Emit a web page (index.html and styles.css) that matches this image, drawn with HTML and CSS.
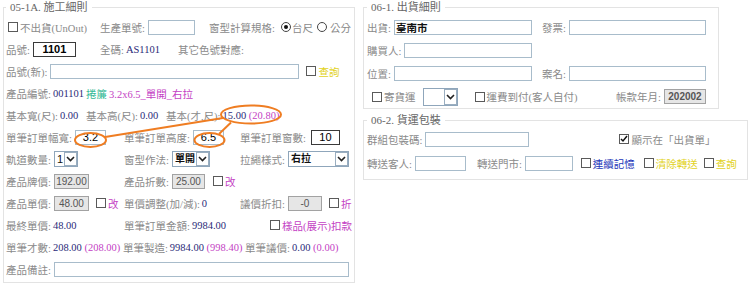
FILE: index.html
```html
<!DOCTYPE html>
<html lang="zh-Hant">
  <head>
    <meta charset="UTF-8" />
    <title>施工細則</title>
    <link rel="stylesheet" href="styles.css">
  </head>
  <body>
    <div class="page">
      <fieldset class="box work">
        <legend>05-1A. 施工細則</legend>
        <div class="row g-top">
          <div class="cell ml2"><span class="cb"></span>不出貨(UnOut)</div>
          <div class="cell">生產單號:<input class="txt w47" type="text"></div>
          <div class="cell">窗型計算規格:<span class="rd on ml6"></span><span class="ml1">台尺</span><span class="rd ml4"></span><span class="ml3">公分</span></div>
        </div>
        <div class="row g-code">
          <div class="cell">品號:<input class="txt dark bold w43" type="text" value="1101"></div>
          <div class="cell">全碼: <span class="val">AS1101</span></div>
          <div class="cell">其它色號對應:</div>
        </div>
        <div class="row">
          品號(新):<input class="txt w249" type="text"><span class="cb ml7"></span><span class="yl">查詢</span>
        </div>
        <div class="row">
          產品編號: <span class="val">001101</span> <span class="tl">捲簾</span> <span class="pk">3.2x6.5_單開_右拉</span>
        </div>
        <div class="row g-base">
          <div class="cell">基本寬(尺): <span class="val">0.00</span></div>
          <div class="cell">基本高(尺): <span class="val">0.00</span></div>
          <div class="cell">基本(才,尺): <span class="val">15.00</span>&nbsp;<span class="pk">(20.80)</span></div>
        </div>
        <div class="row g3">
          <div class="cell">單筆訂單幅寬:<input class="txt w31" type="text" value="3.2"></div>
          <div class="cell">單筆訂單高度:<input class="txt w31" type="text" value="6.5"></div>
          <div class="cell">單筆訂單窗數:<input class="txt dark w29 ml5" type="text" value="10"></div>
        </div>
        <div class="row g3">
          <div class="cell">軌道數量:<span class="sel w24"><span class="sel-v">1</span><span class="arr"><svg width="9" height="6" viewBox="0 0 9 6"><path d="M1 1l3.5 3.5L8 1" fill="none" stroke="#222" stroke-width="1.6"/></svg></span></span></div>
          <div class="cell">窗型作法:<span class="sel w38"><span class="sel-v b">單開</span><span class="arr"><svg width="9" height="6" viewBox="0 0 9 6"><path d="M1 1l3.5 3.5L8 1" fill="none" stroke="#222" stroke-width="1.6"/></svg></span></span></div>
          <div class="cell">拉繩樣式:<span class="sel w61"><span class="sel-v b">右拉</span><span class="arr"><svg width="9" height="6" viewBox="0 0 9 6"><path d="M1 1l3.5 3.5L8 1" fill="none" stroke="#222" stroke-width="1.6"/></svg></span></span></div>
        </div>
        <div class="row g3">
          <div class="cell">產品牌價:<input class="txt off w35" type="text" value="192.00"></div>
          <div class="cell">產品折數:<input class="txt off w33" type="text" value="25.00"><span class="cb ml8"></span><span class="pk">改</span></div>
          <div class="cell"></div>
        </div>
        <div class="row g3">
          <div class="cell">產品單價:<input class="txt off w35" type="text" value="48.00"><span class="cb ml7"></span><span class="pk">改</span></div>
          <div class="cell">單價調整(加/減): <span class="val">0</span></div>
          <div class="cell">議價折扣:<input class="txt off w34" type="text" value="-0"><span class="cb ml7"></span><span class="pk">折</span></div>
        </div>
        <div class="row g3">
          <div class="cell">最終單價: <span class="val">48.00</span></div>
          <div class="cell">單筆訂單金額: <span class="val">9984.00</span></div>
          <div class="cell end"><span class="cb"></span><span class="pk">樣品(展示)扣款</span></div>
        </div>
        <div class="row">
          單筆才數: <span class="val">208.00</span>&nbsp;<span class="pk">(208.00)</span>&nbsp;單筆製造: <span class="val">9984.00</span>&nbsp;<span class="pk">(998.40)</span>&nbsp;單筆議價: <span class="val">0.00</span>&nbsp;<span class="pk">(0.00)</span>
        </div>
        <div class="row">
          產品備註:<input class="txt w295" type="text">
        </div>
      </fieldset>

      <div class="side">
        <fieldset class="box ship">
          <legend>06-1. 出貨細則</legend>
          <div class="row-s g2">
            <div class="cell">出貨:<input class="txt grow city" type="text" value="臺南市"></div>
            <div class="cell">發票:<input class="txt grow" type="text"></div>
          </div>
          <div class="row-s g2">
            <div class="cell">購買人:<input class="txt grow" type="text"></div>
          </div>
          <div class="row-s g2">
            <div class="cell">位置:<input class="txt grow" type="text"></div>
            <div class="cell">案名:<input class="txt grow" type="text"></div>
          </div>
          <div class="row-s">
            <span class="cb ml5"></span>寄貨運
            <span class="sel tall w35 ml7"><span class="sel-v"></span><span class="arr"><svg width="9" height="6" viewBox="0 0 9 6"><path d="M1 1l3.5 3.5L8 1" fill="none" stroke="#222" stroke-width="1.6"/></svg></span></span>
            <span class="cb ml17"></span>運費到付(客人自付)
            <span class="push">帳款年月:</span><input class="txt off bold w42" type="text" value="202002">
          </div>
        </fieldset>

        <fieldset class="box pack">
          <legend>06-2. 貨運包裝</legend>
          <div class="row-p">
            群組包裝碼:<input class="txt w104" type="text">
            <span class="cb on ml90"><svg width="8" height="8" viewBox="0 0 8 8"><path d="M1 4l2 2 4-5" fill="none" stroke="#111" stroke-width="1.5"/></svg></span>顯示在「出貨單」
          </div>
          <div class="row-p">
            轉送客人:<input class="txt w51" type="text">
            <span class="ml11">轉送門市:</span><input class="txt w48" type="text">
            <span class="cb ml8"></span><span class="bl">連續記憶</span>
            <span class="cb ml9"></span><span class="yl">清除轉送</span>
            <span class="cb ml6"></span><span class="yl">查詢</span>
          </div>
        </fieldset>
      </div>

      <svg class="marks" width="750" height="292" viewBox="0 0 750 292">
        <ellipse cx="251" cy="114.5" rx="30" ry="9" />
        <ellipse cx="90.5" cy="140" rx="15.5" ry="7" />
        <ellipse cx="209.5" cy="140" rx="15" ry="7" />
        <path d="M105 137L223 118" />
        <path d="M219 134L231 122.5" />
      </svg>
    </div>
  </body>
</html>
```

FILE: styles.css
```css
body {
  margin: 0;
  background-color: #ffffff;
  font-family: "Liberation Serif", "Noto Sans CJK TC", serif;
  font-size: 10.5px;
  color: #8a8a8a;
}
.page {
  position: relative;
  display: flex;
  align-items: flex-start;
  width: 750px;
  height: 292px;
}
.box {
  margin: 0;
  min-width: 0;
  box-sizing: border-box;
  border: 1px solid #e3e3e3;
}
legend {
  padding: 0 4px;
  font-size: 11px;
  line-height: 14px;
  color: #666;
}
.work {
  width: 352px;
  margin-left: 3px;
  padding: 2px 2px 2px 2px;
}
.side {
  margin-left: 8px;
  display: flex;
  flex-direction: column;
}
.ship {
  width: 356px;
  padding: 2px 12px 0 3px;
}
.pack {
  width: 385px;
  margin-top: 4px;
  padding: 0 3px 4px 3px;
}

/* rows */
.row {
  display: flex;
  align-items: center;
  height: 22px;
  white-space: nowrap;
}
.row-s {
  display: flex;
  align-items: center;
  height: 23px;
  white-space: nowrap;
}
.row-p {
  display: flex;
  align-items: center;
  height: 24px;
  white-space: nowrap;
}
.g-top,
.g-code,
.g-base,
.g3,
.g2 {
  display: grid;
  align-items: center;
}
.g-top {
  grid-template-columns: 94px 109px 1fr;
}
.g-code {
  grid-template-columns: 94px 78px 1fr;
}
.g-base {
  grid-template-columns: 80px 80px 1fr;
}
.g3 {
  grid-template-columns: 118px 116px 1fr;
}
.g2 {
  grid-template-columns: 165px 164px;
  column-gap: 10px;
}
.cell {
  display: flex;
  align-items: center;
  white-space: nowrap;
}
.cell.end {
  justify-content: flex-end;
}
.push {
  margin-left: auto;
}

/* text colours */
.val {
  color: #2a2a78;
  margin-left: 2px;
}
.pk {
  color: #c43fc4;
}
.tl {
  color: #35b996;
  margin: 0 2px;
}
.yl {
  color: #e2d21c;
}
.bl {
  color: #2234b8;
}

/* inputs */
.txt {
  height: 15px;
  box-sizing: border-box;
  margin: 0 0 0 3px;
  padding: 0 1px;
  border: 1px solid #a8bccb;
  background-color: #fff;
  font-family: "Liberation Sans", Arial, sans-serif;
  font-size: 11px;
  color: #000;
  text-align: center;
  outline: none;
}
.txt.dark {
  border-color: #3a3a3a;
}
.txt.bold {
  font-weight: bold;
}
.txt.off {
  background-color: #e6e6e6;
  border-color: #a2a2a2;
  color: #555;
  font-size: 10px;
  padding: 0;
}
.txt.grow {
  flex: 1;
  width: 0;
  min-width: 0;
  text-align: left;
}
.txt.city {
  font-family: "Noto Sans CJK TC", sans-serif;
  font-size: 10.5px;
  font-weight: bold;
  color: #111;
}
.w24 { width: 24px; }
.w29 { width: 29px; }
.w31 { width: 31px; }
.w33 { width: 33px; }
.w34 { width: 34px; }
.w35 { width: 35px; }
.w38 { width: 38px; }
.w42 { width: 42px; }
.w43 { width: 43px; }
.w47 { width: 47px; }
.w48 { width: 48px; }
.w51 { width: 51px; }
.w61 { width: 61px; }
.w104 { width: 104px; }
.w249 { width: 249px; }
.w295 { width: 295px; }

/* select boxes */
.sel {
  display: inline-flex;
  align-items: stretch;
  height: 16px;
  box-sizing: border-box;
  margin-left: 3px;
  border: 1px solid #8fa6bb;
  background-color: #fff;
}
.sel.tall {
  height: 18px;
}
.sel-v {
  flex: 1;
  padding-left: 2px;
  font-family: "Liberation Sans", "Noto Sans CJK TC", sans-serif;
  font-size: 11px;
  line-height: 14px;
  color: #111;
}
.sel-v.b {
  font-size: 10px;
  font-weight: bold;
}
.arr {
  width: 13px;
  box-sizing: border-box;
  border: 1px solid #9aaec0;
  display: flex;
  align-items: center;
  justify-content: center;
}

/* checkbox and radio */
.cb {
  flex: none;
  display: inline-flex;
  align-items: center;
  justify-content: center;
  width: 10px;
  height: 10px;
  box-sizing: border-box;
  margin-right: 2px;
  border: 1px solid #5a5a5a;
  background-color: #fff;
}
.rd {
  flex: none;
  display: inline-flex;
  align-items: center;
  justify-content: center;
  width: 10px;
  height: 10px;
  box-sizing: border-box;
  border: 1px solid #444;
  border-radius: 50%;
}
.rd.on::after {
  content: "";
  width: 4px;
  height: 4px;
  border-radius: 50%;
  background-color: #111;
}

/* spacing helpers */
.ml1 { margin-left: 1px; }
.ml2 { margin-left: 2px; }
.ml3 { margin-left: 3px; }
.ml4 { margin-left: 4px; }
.ml5 { margin-left: 5px; }
.ml6 { margin-left: 6px; }
.ml7 { margin-left: 7px; }
.ml8 { margin-left: 8px; }
.ml9 { margin-left: 9px; }
.ml11 { margin-left: 11px; }
.ml17 { margin-left: 17px; }
.ml90 { margin-left: 90px; }

/* orange notes drawn over the form */
.marks {
  position: absolute;
  left: 0;
  top: 0;
  pointer-events: none;
}
.marks ellipse,
.marks path {
  fill: none;
  stroke: #ef7d22;
  stroke-width: 2;
}
```
